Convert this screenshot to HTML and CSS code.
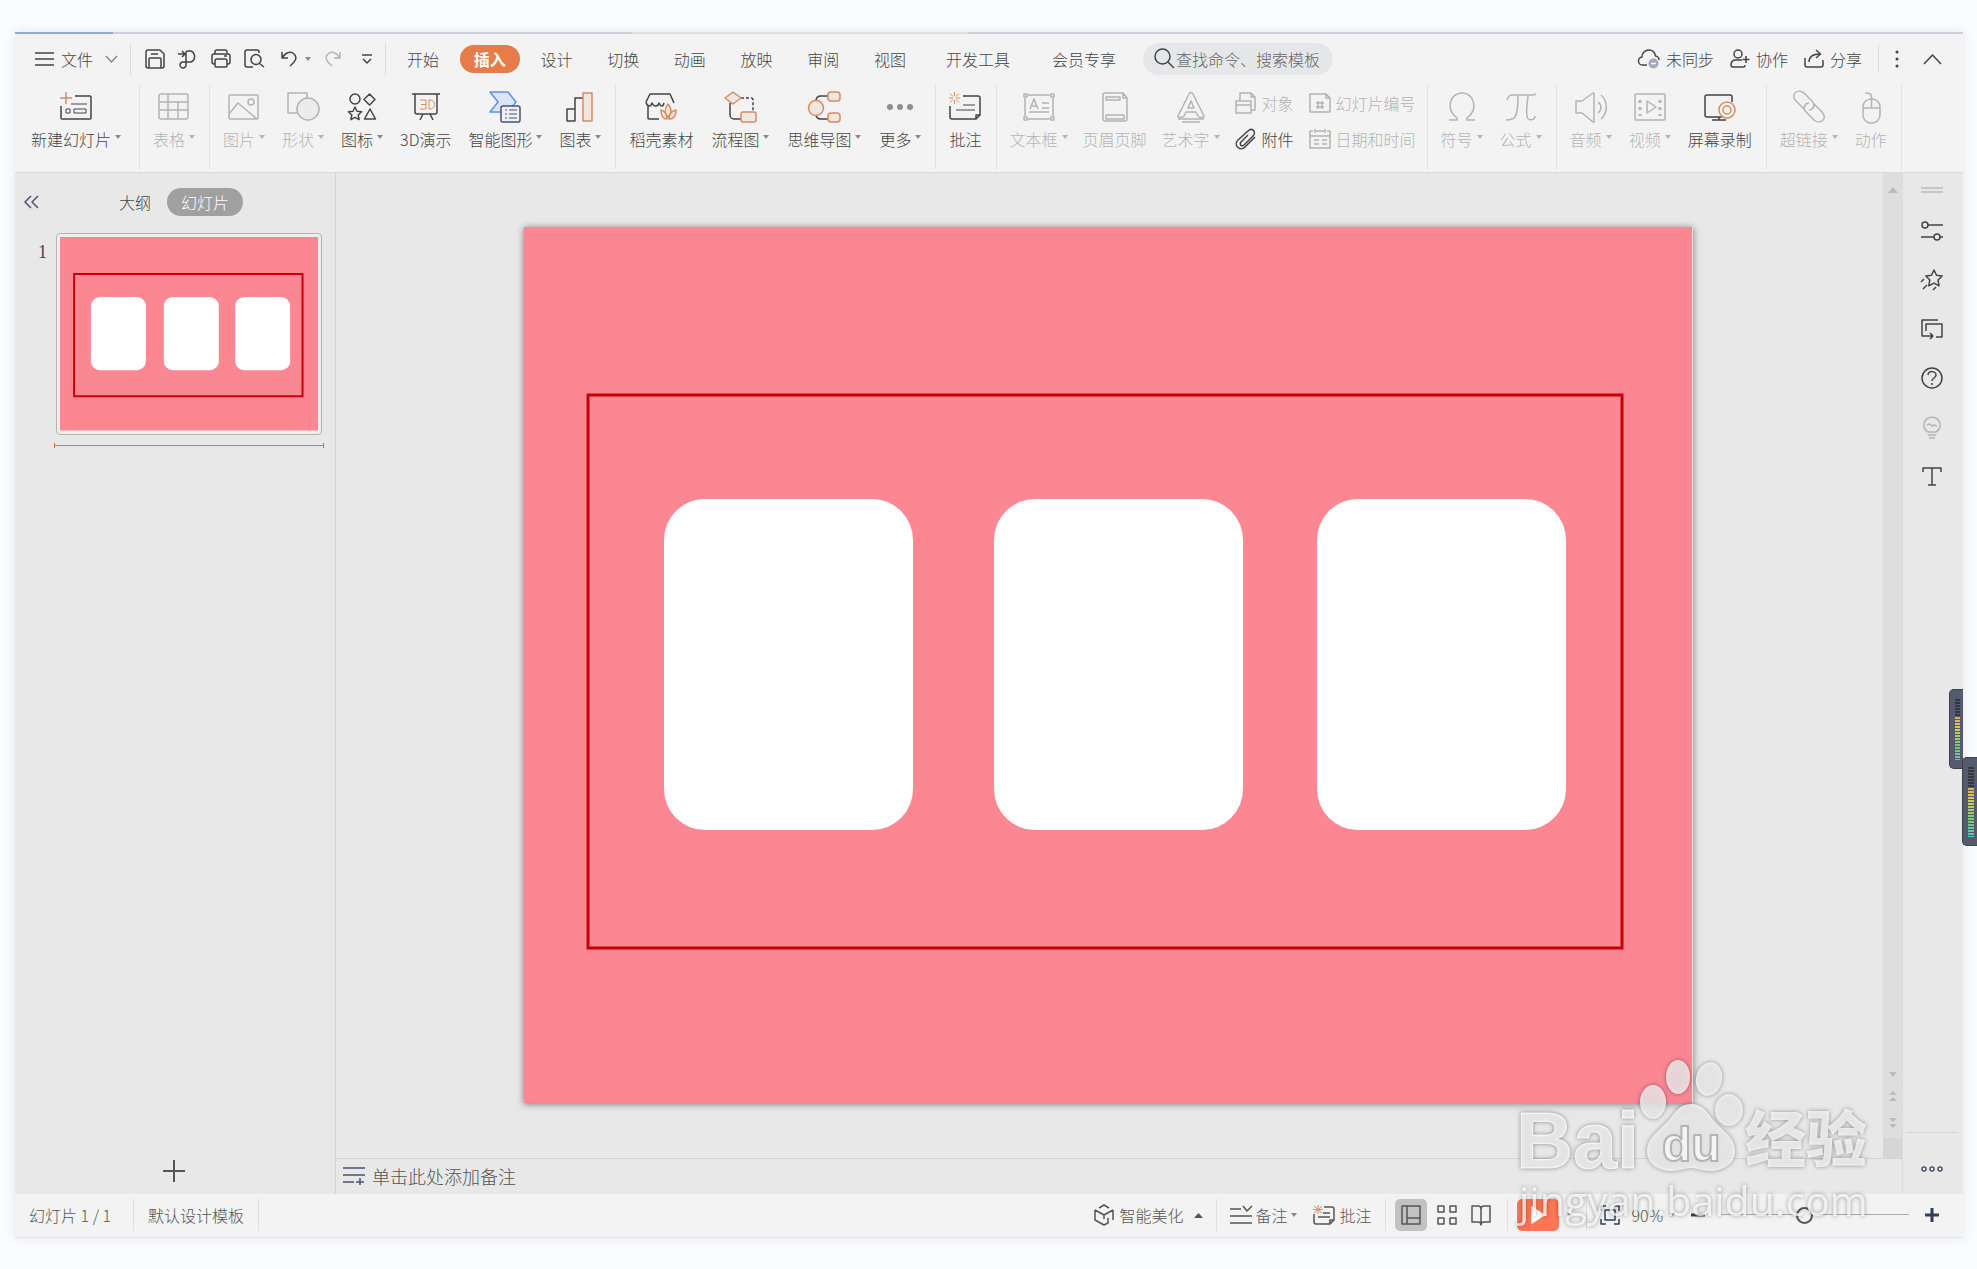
FILE: index.html
```html
<!DOCTYPE html>
<html lang="zh-CN">
<head>
  <meta charset="UTF-8">
  <title>演示文稿</title>
  <link rel="stylesheet" href="styles.css">
</head>
<body>
  <div class="app">
    <!-- 菜单栏 -->
    <header class="menubar">
      <button class="file-btn">
        <svg width="19" height="16" viewBox="0 0 19 16"><path d="M0 2h19M0 8h19M0 14h19"/></svg>
        文件
        <svg class="chevron" width="13" height="8" viewBox="0 0 13 8"><path d="M1 1l5.500 6L12 1"/></svg>
      </button>
      <span class="sep"></span>
      <div class="quick">
        <button aria-label="保存"><svg width="20" height="20" viewBox="0 0 20 20"><path d="M3 1h12l4 4v12a2 2 0 0 1-2 2H3a2 2 0 0 1-2-2V3a2 2 0 0 1 2-2zM4 19v-9a1 1 0 0 1 1-1h10a1 1 0 0 1 1 1v9M6 5h7"/></svg></button>
        <button aria-label="输出"><svg width="20" height="20" viewBox="0 0 20 20"><path d="M0 5h7M4 2l3 3-3 3M10 2h3a6 6 0 0 1 0 11H5.500a3 3 0 1 0 2.500 3V4a2 2 0 0 1 2-2"/></svg></button>
        <button aria-label="打印"><svg width="20" height="20" viewBox="0 0 20 20"><path d="M4 5V3a2 2 0 0 1 2-2h8a2 2 0 0 1 2 2v2M4 15H3a2 2 0 0 1-2-2V7a2 2 0 0 1 2-2h14a2 2 0 0 1 2 2v6a2 2 0 0 1-2 2h-1M6 10h8a2 2 0 0 1 2 2v5a1 1 0 0 1-1 1H5a1 1 0 0 1-1-1v-5a2 2 0 0 1 2-2zM13 7h3"/></svg></button>
        <button aria-label="打印预览"><svg width="20" height="20" viewBox="0 0 20 20"><path d="M9 18H3a2 2 0 0 1-2-2V3a2 2 0 0 1 2-2h10a2 2 0 0 1 2 2v1M15.500 14.500L20 18"/><circle cx="12" cy="10.500" r="5"/></svg></button>
      </div>
      <div class="history">
        <button aria-label="撤销"><svg width="16" height="18" viewBox="0 0 16 18"><path d="M1 2v6h6M1.500 7.500C5 2 10 1 13 4c4 4 1 8-4 12"/></svg><i class="caret"></i></button>
        <button class="off" aria-label="恢复"><svg width="16" height="18" viewBox="0 0 16 18"><path d="M15 2v6H9M14.500 7.500C11 2 6 1 3 4c-4 4-1 8 4 12"/></svg></button>
        <button aria-label="自定义"><svg width="10" height="10" viewBox="0 0 10 10"><path d="M0 1h10M1 5l4 4 4-4"/></svg></button>
      </div>
      <span class="sep"></span>
      <nav class="tabs">
        <button>开始</button>
        <button class="active">插入</button>
        <button>设计</button>
        <button>切换</button>
        <button>动画</button>
        <button>放映</button>
        <button>审阅</button>
        <button>视图</button>
      </nav>
      <nav class="tabs-more">
        <button>开发工具</button>
        <button>会员专享</button>
      </nav>
      <div class="search">
        <label for="search"><svg width="21" height="21" viewBox="0 0 21 21"><circle cx="8.500" cy="8.500" r="7.500"/><path d="M14 14l6 6"/></svg></label>
        <input id="search" type="text" placeholder="查找命令、搜索模板">
      </div>
      <div class="account">
        <button><svg width="22" height="20" viewBox="0 0 22 20"><path d="M9 16H5a4 4 0 0 1-1-8c0-4 3-7 7-7 4 0 6 3 6.500 6 2 0 3.500 2 3.500 4"/><circle class="badge" cx="15.500" cy="14.500" r="5"/><path class="minus" d="M13 14.500h5"/></svg>未同步</button>
        <button><svg width="20" height="20" viewBox="0 0 20 20"><circle cx="8" cy="5" r="4"/><path d="M12 11H6c-3 0-5 2-5 5 0 2 1 2 2 2h11c1 0 1-1 1-2M16 7v7M12.500 10.500h7"/></svg>协作</button>
        <button><svg width="20" height="20" viewBox="0 0 20 20"><path d="M1 9v7a2 2 0 0 0 2 2h14a2 2 0 0 0 2-2v-5M5 13c0-5 3-8 11-8M12 1l4.500 4L12 9"/></svg>分享</button>
        <span class="sep"></span>
        <button class="dots-v" aria-label="更多"><svg width="4" height="18" viewBox="0 0 4 18"><g class="solid"><circle cx="2" cy="2" r="1.500"/><circle cx="2" cy="9" r="1.500"/><circle cx="2" cy="16" r="1.500"/></g></svg></button>
        <button aria-label="收起功能区"><svg width="19" height="12" viewBox="0 0 19 12"><path d="M1 11l8.500-9L18 11"/></svg></button>
      </div>
    </header>

    <!-- 功能区 -->
    <section class="ribbon">
      <div class="group first">
        <button class="tool"><svg viewBox="0 0 32 32"><path d="M15 8h15a1 1 0 0 1 1 1v21a1 1 0 0 1-1 1H2a1 1 0 0 1-1-1V18"/><path class="thin" d="M11 16h16M6 21h4v4H6zM14 21h12v4H14z"/><path class="accent" d="M6 4v12M0 10h12"/></svg><span>新建幻灯片<i class="caret"></i></span></button>
      </div>
      <div class="group">
        <button class="tool off"><svg viewBox="0 0 32 32"><rect x="1" y="6" width="29" height="25" rx="2"/><path d="M1 14h29M1 22h29M10 6v25M20 14v17"/></svg><span>表格<i class="caret"></i></span></button>
      </div>
      <div class="group">
        <button class="tool off"><svg viewBox="0 0 32 32"><rect x="1" y="7" width="29" height="24" rx="1"/><path d="M1 26l9-11 19 16"/><circle cx="23" cy="14" r="3"/></svg><span>图片<i class="caret"></i></span></button>
        <button class="tool off"><svg viewBox="0 0 32 32"><path d="M20 10V5H1v20h10"/><circle class="shade" cx="21" cy="21" r="11"/></svg><span>形状<i class="caret"></i></span></button>
        <button class="tool"><svg viewBox="0 0 32 32"><circle cx="9" cy="11" r="5"/><path d="M23.500 6l5.500 5.500-5.500 5.500-5.500-5.500zM24 21l5.500 10h-11zM9 19l2 4.200 4.600.6-3.400 3.200.9 4.600L9 29.400l-4.100 2.200.9-4.600-3.400-3.200 4.600-.6z"/></svg><span>图标<i class="caret"></i></span></button>
        <button class="tool"><svg viewBox="0 0 32 32"><path d="M2 6h28M5 6v18a2 2 0 0 0 2 2h18a2 2 0 0 0 2-2V6M13 26l-3 6M20 26l3 6"/><path class="accent thin" d="M10 12h6v9h-6M11 16.500h5M19 12v9h1c6 0 6-9 0-9z"/></svg><span>3D演示</span></button>
        <button class="tool"><svg viewBox="0 0 32 32"><path class="blue" d="M1 4h18l8 10-8 10H1l8-10z"/><rect class="navy" x="12" y="18" width="19" height="16" rx="2"/><path class="navy thin" d="M16 22h2M20 22h8M16 26h2M20 26h8M16 30h2M20 30h8"/></svg><span>智能图形<i class="caret"></i></span></button>
        <button class="tool"><svg viewBox="0 0 32 32"><path d="M3 21h8v12H3zM11 33V10h8"/><path class="accent tint" d="M19 5h9v28h-9z"/></svg><span>图表<i class="caret"></i></span></button>
      </div>
      <div class="group wide">
        <button class="tool"><svg viewBox="0 0 32 32"><path d="M14 31H4a1 1 0 0 1-1-1V18M1 14l4-8h20l4 9M1 14c1 5 5 5 6 1 2 4 6 4 7 0 2 4 4 4 5 0"/><path class="accent tint" d="M23 16c-4 5-3 10 0 13 4-3 4-9 0-13zM16 22c0 6 2 9 6 9 0-5-2-8-6-9zM31 22c-4 1-7 4-7 9 5 0 7-3 7-9z"/></svg><span>稻壳素材</span></button>
        <button class="tool"><svg viewBox="0 0 32 32"><path d="M6 15v12a4 4 0 0 0 4 4h7"/><path class="dash" d="M17 10h10a2 2 0 0 1 2 2v12"/><path class="accent tint" d="M9 4l8 6-8 6-8-6zM19 24h11a2 2 0 0 1 2 2v6a2 2 0 0 1-2 2H19a2 2 0 0 1-2-2v-6a2 2 0 0 1 2-2z"/></svg><span>流程图<i class="caret"></i></span></button>
        <button class="tool"><svg viewBox="0 0 32 32"><path d="M8 13c0-3 2-5 5-5h7M8 26c0 3 2 5 5 5h7"/><circle class="accent tint" cx="8" cy="20" r="7.500"/><rect class="accent tint" x="20" y="4" width="12" height="9" rx="3"/><rect class="accent tint" x="20" y="25" width="12" height="9" rx="3"/></svg><span>思维导图<i class="caret"></i></span></button>
        <button class="tool"><svg viewBox="0 0 32 32"><g class="solid grey"><circle cx="6" cy="19" r="3"/><circle cx="16" cy="19" r="3"/><circle cx="26" cy="19" r="3"/></g></svg><span>更多<i class="caret"></i></span></button>
      </div>
      <div class="group">
        <button class="tool"><svg viewBox="0 0 32 32"><path d="M14 8h15a2 2 0 0 1 2 2v17l-4 4H3a2 2 0 0 1-2-2V18M31 27h-4v4z"/><path class="thin" d="M14 17h12M7 22h19"/><path class="accent thin" d="M5.500 4v4M5.500 12v4M0 10h4M7 10h4M1 5.500l3 3M7 11.500l3 3M10 5.500l-3 3M4 11.500l-3 3"/></svg><span>批注</span></button>
      </div>
      <div class="group tight">
        <button class="tool off"><svg viewBox="0 0 32 32"><path d="M5 7h22M5 31h22M2 10v18M30 10v18M6 24h20M19 15h7M19 20h7M7 21l4-10 4 10M8 18h6"/><path d="M1 6h3v3H1zM28 6h3v3h-3zM1 29h3v3H1zM28 29h3v3h-3z"/></svg><span>文本框<i class="caret"></i></span></button>
        <button class="tool off"><svg viewBox="0 0 32 32"><path d="M6 5h18l4 5v21a2 2 0 0 1-2 2H6a2 2 0 0 1-2-2V7a2 2 0 0 1 2-2zM24 5v5h4M7 9h14v3H7zM7 27h18v4H7z"/></svg><span>页眉页脚</span></button>
        <button class="tool off"><svg viewBox="0 0 32 32"><path d="M3 28L14 6c1-2 3-2 4 0l11 22c1 2-5 2-6 0l-2-4H11l-2 4c-1 2-7 2-6 0zM16 13l-3 7h6zM3 31h26M7 34h18"/></svg><span>艺术字<i class="caret"></i></span></button>
        <div class="stack">
          <button class="off"><svg viewBox="0 0 22 22"><path d="M5 9V1h11l4 4v13h-4M1 9h15v12H1zM1 13h15M16 1v4h4"/></svg>对象</button>
          <button><svg viewBox="0 0 22 22"><path d="M13 7l-7 7c-2 3 1 5 3 3l9-9c4-4-1-9-5-5L3 12c-5 5 2 12 7 7l10-10"/></svg>附件</button>
        </div>
        <div class="stack">
          <button class="off"><svg viewBox="0 0 22 22"><path d="M1 2h16l4 4v14H1zM17 2v4h4M9 9v8M13 9v8M7 11h8M7 15h8"/></svg>幻灯片编号</button>
          <button class="off"><svg viewBox="0 0 22 22"><path d="M4 3H1v17h20V3h-3M7 3h8M6 1v4M16 1v4M1 8h20M5 12h5M13 12h5M5 16h5M13 16h5"/></svg>日期和时间</button>
        </div>
      </div>
      <div class="group">
        <button class="tool off"><svg viewBox="0 0 32 32"><path d="M3 32h8v-2C-1 21 4 5 16 5s17 16 5 25v2h8"/></svg><span>符号<i class="caret"></i></span></button>
        <button class="tool off"><svg viewBox="0 0 32 32"><path d="M2 12c1-4 3-5 6-5h17c3 0 5 0 6-1M13 8c0 13-1 22-6 23-2 1-4 1-6 1M23 8c-1 8-2 15-1 20 1 6 8 4 8 0"/></svg><span>公式<i class="caret"></i></span></button>
      </div>
      <div class="group">
        <button class="tool off"><svg viewBox="0 0 32 32"><path d="M1 13h6l11-8h1v29h-1L7 25H1zM23 14c4 3 4 8 0 11M26 7c7 6 7 18 0 24"/></svg><span>音频<i class="caret"></i></span></button>
        <button class="tool off"><svg viewBox="0 0 32 32"><rect x="1" y="6" width="30" height="26" rx="1"/><path d="M13 13v12l9-6z"/><path class="dotted" d="M6 12v16M26 12v16"/></svg><span>视频<i class="caret"></i></span></button>
        <button class="tool"><svg viewBox="0 0 32 32"><path d="M28 14V9a2 2 0 0 0-2-2H3a2 2 0 0 0-2 2v18a2 2 0 0 0 2 2h15M15 29v3M8 32h14"/><circle class="accent" cx="23" cy="22" r="8"/><circle class="accent" cx="23" cy="22" r="4"/></svg><span>屏幕录制</span></button>
      </div>
      <div class="group">
        <button class="tool off"><svg viewBox="0 0 32 32"><path d="M11 21l-8-8C-3 6 5 0 11 5l8 8c4 4 1 9-3 9M21 16l8 8c6 7-2 13-8 8l-8-8c-4-4-1-9 3-9"/></svg><span>超链接<i class="caret"></i></span></button>
        <button class="tool off"><svg viewBox="0 0 32 32"><rect x="8" y="11" width="17" height="24" rx="8"/><path d="M8 20h17M16.500 20V9c0-4-3-4-6-4"/></svg><span>动作</span></button>
      </div>
    </section>

    <main class="work">
      <!-- 幻灯片列表 -->
      <aside class="outline">
        <div class="outline-head">
          <button class="collapse" aria-label="收起"><svg width="15" height="14" viewBox="0 0 15 14"><path d="M7 1L1 7l6 6M14 1L8 7l6 6"/></svg></button>
          <button>大纲</button>
          <button class="pill">幻灯片</button>
        </div>
        <div class="thumb-row">
          <span class="num">1</span>
          <div class="thumb">
            <svg class="slide-art" viewBox="0 0 1168 876"><use href="#slide"/></svg>
          </div>
        </div>
        <div class="drop-line"></div>
        <button class="add" aria-label="新建幻灯片"><svg width="22" height="22" viewBox="0 0 22 22"><path d="M11 0v22M0 11h22"/></svg></button>
      </aside>

      <!-- 编辑区 -->
      <section class="editor">
        <div class="stage">
          <div class="canvas">
            <svg class="slide-art slide" viewBox="0 0 1168 876">
              <g id="slide">
                <rect class="s-bg" width="1168" height="876"/>
                <rect class="s-frame" x="64" y="168" width="1034" height="553"/>
                <rect class="s-card" x="140" y="272" width="249" height="331" rx="41"/>
                <rect class="s-card" x="470" y="272" width="249" height="331" rx="41"/>
                <rect class="s-card" x="793" y="272" width="249" height="331" rx="41"/>
              </g>
            </svg>
          </div>
          <div class="scrollbar">
            <svg width="10" height="6" viewBox="0 0 10 6"><path d="M5 0l5 6H0z"/></svg>
            <svg class="down" width="10" height="58" viewBox="0 0 10 58"><path d="M1 2h8L5 7zM5 21l4 4H1zM5 27l4 4H1zM1 48h8l-4 4zM1 54h8l-4 4z"/></svg>
            <span class="corner"></span>
          </div>
        </div>
        <div class="notes">
          <svg width="22" height="18" viewBox="0 0 22 18"><path d="M0 1h22M0 8h22M0 15h11M17 11v7M13 15h8"/></svg>
          单击此处添加备注
        </div>
      </section>

      <!-- 右侧工具条 -->
      <aside class="rail">
        <svg class="grip" width="22" height="6" viewBox="0 0 22 6"><path d="M0 1h22M0 5h22"/></svg>
        <button aria-label="对象属性"><svg viewBox="0 0 22 22"><circle cx="4" cy="5" r="3"/><path d="M7 5h15M0 17h13M19 17h3"/><circle cx="16" cy="17" r="3"/></svg></button>
        <button aria-label="动画"><svg viewBox="0 0 22 22"><path d="M13 1l2.500 5.200 5.700.8-4.200 4 1 5.800-5-2.700-5.200 2.700 1-5.800-4-4 5.700-.8zM0 13l3-3M2 20l4-4M12 21l3-3"/></svg></button>
        <button aria-label="切换"><svg viewBox="0 0 22 22"><path d="M17 2H1v16h10M9 15l3 3-3 3M5 13V6h16v13h-6"/></svg></button>
        <button aria-label="帮助"><svg viewBox="0 0 22 22"><circle cx="11" cy="11" r="10"/><path d="M7 8c0-5 8-4 8 0 0 3-4 3-4 6M11 16v2"/></svg></button>
        <button class="off" aria-label="提示"><svg viewBox="0 0 22 22"><path d="M7 16c-5-3-5-8-3-11 3-5 11-5 14 0 2 3 2 8-3 11zM7 19h8M8 22h6M6 9l3-1 2 2 2-1 3 1"/></svg></button>
        <button aria-label="文字"><svg viewBox="0 0 22 22"><path d="M2 7V3h18v4M11 3v17M7 20h8"/></svg></button>
        <div class="rail-foot">
          <button aria-label="更多"><svg viewBox="0 0 22 22"><g class="navy"><circle cx="3" cy="11" r="2"/><circle cx="11" cy="11" r="2"/><circle cx="19" cy="11" r="2"/></g></svg></button>
        </div>
      </aside>
    </main>

    <!-- 状态栏 -->
    <footer class="status">
      <span class="cell">幻灯片 1 / 1</span>
      <span class="cell">默认设计模板</span>
      <div class="status-right">
        <div class="set beauty">
          <button><svg width="20" height="22" viewBox="0 0 20 22"><path d="M5 4l5-3 5 3M1 6l9 5 9-5M1 6v10l9 5 4-2v-5M10 11v4M19 6v10"/></svg>智能美化</button>
          <svg width="9" height="5" viewBox="0 0 9 5"><path class="solid" d="M4.500 0L9 5H0z"/></svg>
        </div>
        <div class="set">
          <button class="close"><svg width="22" height="20" viewBox="0 0 22 20"><path d="M0 4h11M13 1l4 5 5-5M0 11h22M0 18h22"/></svg>备注<i class="caret"></i></button>
          <button><svg width="22" height="20" viewBox="0 0 22 20"><path d="M11 2h8a2 2 0 0 1 2 2v11l-4 4H3a2 2 0 0 1-2-2V9M21 15h-4v4M10 8h7M5 12h12"/><path class="accent thin" d="M5 0v9M0 4.500h10M1 1l8 7M9 1L1 8"/></svg>批注</button>
        </div>
        <div class="set views">
          <button class="on" aria-label="普通视图"><svg width="20" height="20" viewBox="0 0 20 20"><path d="M1 1h18v18H1zM6 1v18M6 13h13"/></svg></button>
          <button aria-label="浏览视图"><svg width="20" height="20" viewBox="0 0 20 20"><path d="M1 1h6v6H1zM13 1h6v6h-6zM1 13h6v6H1zM13 13h6v6h-6z"/></svg></button>
          <button aria-label="阅读视图"><svg width="20" height="20" viewBox="0 0 20 20"><path d="M10 4c0-2-1-3-3-3H1v16h6c2 0 3 1 3 3 0-2 1-3 3-3h6V1h-6c-2 0-3 1-3 3v15"/></svg></button>
        </div>
        <div class="set play">
          <button class="play-btn" aria-label="放映"><svg width="14" height="18" viewBox="0 0 14 18"><path d="M1 1l12 8-12 8z"/></svg></button>
          <i class="caret"></i>
        </div>
        <div class="zoom">
          <button aria-label="适应窗口"><svg class="navy-line" width="20" height="20" viewBox="0 0 20 20"><path d="M1 6V1h5M14 1h5v5M19 14v5h-5M6 19H1v-5M5 5h10v10H5z"/></svg></button>
          <button class="percent">90%<i class="caret"></i></button>
          <button class="bold" aria-label="缩小"><svg width="14" height="14" viewBox="0 0 14 14"><path d="M0 7h14"/></svg></button>
          <input type="range" min="0" max="100" value="44" aria-label="缩放">
          <button class="bold" aria-label="放大"><svg width="14" height="14" viewBox="0 0 14 14"><path d="M7 0v14M0 7h14"/></svg></button>
        </div>
      </div>
    </footer>
  </div>

  <div class="meter meter-a"><i></i></div>
  <div class="meter meter-b"><i></i></div>

  <svg class="watermark" width="380" height="180" viewBox="0 0 380 180">
    <text class="bai" x="11" y="118">Bai</text>
    <ellipse cx="148" cy="52" rx="13" ry="17"/>
    <ellipse cx="173" cy="27" rx="12" ry="17"/>
    <ellipse cx="204" cy="29" rx="13" ry="17" transform="rotate(12 204 29)"/>
    <ellipse cx="224" cy="60" rx="14" ry="16"/>
    <path d="M186 54c12 0 16 8 23 17 9 10 21 16 21 30 0 13-12 20-25 20-9 0-13-3-19-3s-10 3-19 3c-15 0-25-8-25-20 0-13 11-19 20-29 8-9 12-18 24-18z"/>
    <text class="du" x="157" y="111">du</text>
    <text class="jy" x="240" y="112">经验</text>
    <text class="url" x="14" y="166">jingyan.baidu.com</text>
  </svg>
</body>
</html>
```

FILE: styles.css
```css
* {
  box-sizing: border-box;
}
body {
  margin: 0;
  min-height: 100vh;
  padding: 32px 14px 31px 15px;
  display: flex;
  position: relative;
  overflow-x: hidden;
  background: #fbfcff;
  color: #444;
  font: 300 16px/20px "Noto Sans CJK SC", sans-serif;
}
button,
input {
  margin: 0;
  padding: 0;
  border: 0;
  background: none;
  color: inherit;
  font: inherit;
}
button {
  display: flex;
  align-items: center;
  flex: none;
  white-space: nowrap;
}
svg {
  display: block;
  flex: none;
  overflow: visible;
  fill: none;
  stroke: currentColor;
  stroke-width: 1.5;
  stroke-linejoin: round;
}
.thin {
  stroke-width: 1;
}
.accent {
  stroke: #d98c5f;
}
.tint {
  fill: #f1e6e0;
}
.solid {
  fill: currentColor;
  stroke: none;
}
.grey {
  fill: #8f8f8f;
}
.navy {
  stroke: #4a5370;
  fill: #f0f1f4;
}
.blue {
  stroke: #5b8ff5;
  fill: #dbe5f5;
}
.shade {
  fill: #ececec;
}
.dash {
  stroke-dasharray: 3 2;
}
.dotted {
  stroke-width: 3;
  stroke-dasharray: 3 4;
}
.off {
  color: #b4b4b4;
}
.caret {
  border: 3px solid transparent;
  border-top: 4px solid #8a8a8a;
  border-bottom: 0;
}
.off .caret {
  border-top-color: #b4b4b4;
}
.sep {
  width: 1px;
  height: 32px;
  background: #dcdcdc;
}

.app {
  flex: 1;
  min-width: 0;
  display: flex;
  flex-direction: column;
  background: #f3f3f3;
  border-bottom: 1px solid #e3e5e8;
  box-shadow: 0 0 10px rgba(60, 70, 90, .12);
}

/* 菜单栏 */
.menubar {
  display: flex;
  align-items: center;
  height: 53px;
  padding: 0 21px 0 20px;
  background: linear-gradient(90deg, #94a8e2 98px, #cdd1da 98px 617px, #dfe1e5 617px 953px, #cdd1da 953px) 0 0 / 100% 2px no-repeat;
}
.file-btn {
  gap: 7px;
  margin-right: 12px;
}
.chevron {
  margin-left: 5px;
  color: #888;
}
.quick {
  display: flex;
  gap: 13px;
  margin: 0 17px 0 14px;
}
.history {
  display: flex;
  gap: 14px;
  margin-right: 13px;
}
.history button:first-child {
  gap: 8px;
}
.history button:last-child {
  margin-left: 7px;
}
.tabs {
  display: flex;
  justify-content: space-between;
  width: 527px;
  margin-left: 7px;
}
.tabs button {
  height: 28px;
  padding: 0 14px;
  border-radius: 14px;
}
.tabs .active {
  background: #e77c4b;
  color: #fff;
  font-weight: 700;
}
.tabs-more {
  display: flex;
  gap: 42px;
  margin: 0 27px 0 26px;
}
.search {
  display: flex;
  align-items: center;
  gap: 1px;
  width: 190px;
  height: 32px;
  padding-left: 11px;
  border-radius: 16px;
  background: #e6e7e9;
}
.search input {
  width: 150px;
  outline: none;
}
.search input::placeholder {
  color: #666;
}
.account {
  display: flex;
  align-items: center;
  gap: 16px;
  margin-left: auto;
}
.account button {
  gap: 6px;
}
.account .sep {
  height: 27px;
}
.account .dots-v {
  margin-right: 8px;
}
.badge {
  fill: #a3aabd;
  stroke: none;
}
.minus {
  stroke: #fff;
}

/* 功能区 */
.ribbon {
  display: flex;
  height: 88px;
  padding: 0 0 3px 3px;
  border-bottom: 1px solid #dadada;
}
.group {
  display: flex;
  align-items: flex-start;
  gap: 17px;
  padding: 0 14px 0 13px;
  border-right: 1px solid #e2e2e2;
}
.first {
  padding-right: 18px;
}
.wide {
  gap: 18px;
}
.tight {
  gap: 15px;
  padding-right: 11px;
}
.tool {
  flex-direction: column;
  gap: 8px;
  padding-top: 2px;
}
.tool > svg {
  width: 32px;
  height: 34px;
}
.tool span {
  display: flex;
  gap: 4px;
}
.tool .caret {
  margin-top: 6px;
  height: 4px;
}
.stack {
  display: flex;
  flex-direction: column;
  gap: 16px;
  padding-top: 8px;
}
.stack button {
  gap: 5px;
}
.stack svg {
  width: 22px;
  height: 22px;
  margin: -1px 0;
}

/* 主体 */
.work {
  flex: 1;
  display: flex;
  background: #e8e8e8;
}
.outline {
  flex: none;
  width: 321px;
  display: flex;
  flex-direction: column;
  border-right: 1px solid #d3d3d3;
}
.outline-head {
  display: flex;
  align-items: center;
  padding: 15px 0 0 9px;
}
.collapse {
  margin-right: 80px;
  color: #4a5370;
}
.pill {
  height: 28px;
  margin-left: 16px;
  padding: 0 14px;
  border-radius: 14px;
  background: #a0a0a0;
  color: #fff;
}
.thumb-row {
  display: flex;
  margin-top: 17px;
  --frame-width: 2px;
}
.num {
  width: 41px;
  padding: 9px 9px 0 0;
  text-align: right;
  font: 18px/20px "Liberation Serif", serif;
}
.thumb {
  width: 266px;
  padding: 3px;
  border: 1px solid #b5b5b5;
  border-radius: 4px;
  background: #eee;
}
.slide-art {
  width: 100%;
  aspect-ratio: 4 / 3;
}
.s-bg {
  fill: #fb8793;
  stroke: none;
}
.s-frame {
  stroke: #c80000;
  stroke-width: var(--frame-width, 3px);
  stroke-linejoin: miter;
  vector-effect: non-scaling-stroke;
}
.s-card {
  fill: #fff;
  stroke: none;
}
.drop-line {
  width: 270px;
  height: 5px;
  margin: 8px 0 0 39px;
  border: solid #d9692a;
  border-width: 0 1px;
  background: linear-gradient(#db7d4a, #db7d4a) 0 2px / 100% 1px no-repeat;
}
.add {
  margin: auto auto 12px 148px;
  color: #555;
}
.add svg {
  stroke-width: 2;
}
.editor {
  flex: 1;
  min-width: 0;
  display: flex;
  flex-direction: column;
}
.stage {
  flex: 1;
  display: flex;
}
.canvas {
  flex: 1;
  display: flex;
  align-items: center;
  justify-content: center;
  padding: 0 2px 2px 0;
}
.slide {
  width: 75.6%;
  box-shadow: 0 1px 7px rgba(0, 0, 0, .5);
}
.scrollbar {
  width: 19px;
  display: flex;
  flex-direction: column;
  align-items: center;
  padding-top: 14px;
  background: #dedede;
}
.scrollbar svg {
  fill: #bbb;
  stroke: none;
}
.scrollbar .down {
  margin-top: auto;
}
.corner {
  width: 19px;
  height: 20px;
  margin-top: 10px;
  background: #d6d6d6;
}
.notes {
  display: flex;
  align-items: center;
  gap: 7px;
  height: 36px;
  padding: 0 0 1px 7px;
  border-top: 1px solid #d5d5d5;
  color: #555;
  font-size: 18px;
}
.notes svg {
  color: #4a5370;
}
.rail {
  flex: none;
  width: 61px;
  display: flex;
  flex-direction: column;
  align-items: center;
  gap: 27px;
  padding: 14px 2px 0 0;
  border-left: 1px solid #dcdcdc;
}
.rail button svg {
  width: 22px;
  height: 22px;
}
.grip {
  color: #bbb;
}
.rail-foot {
  display: flex;
  justify-content: center;
  align-items: center;
  width: 52px;
  height: 62px;
  margin-top: auto;
  padding-top: 10px;
  border-top: 1px solid #d5d5d5;
}

/* 状态栏 */
.status {
  display: flex;
  align-items: center;
  height: 43px;
  padding-bottom: 1px;
  color: #555;
}
.cell {
  padding: 6px 14px;
  border-right: 1px solid #e0e0e0;
}
.cell:first-child {
  min-width: 119px;
}
.status-right {
  display: flex;
  margin-left: auto;
  padding-right: 24px;
}
.set {
  display: flex;
  align-items: center;
  gap: 16px;
  height: 32px;
  padding: 0 13px;
  border-right: 1px solid #e0e0e0;
}
.set button {
  gap: 5px;
}
.set .close {
  gap: 3px;
}
.beauty {
  gap: 11px;
}
.views {
  gap: 14px;
  padding: 0 16px 0 9px;
}
.views .on {
  padding: 6px;
  margin-right: -4px;
  border-radius: 5px;
  background: #c2c2c2;
}
.play {
  gap: 8px;
  padding: 0 13px 0 9px;
}
.play-btn {
  width: 42px;
  height: 32px;
  justify-content: center;
  border-radius: 5px;
  background: #fc7753;
  color: #fff;
}
.play-btn path {
  fill: #fff;
}
.zoom {
  display: flex;
  align-items: center;
  gap: 16px;
  padding-left: 13px;
}
.percent {
  gap: 6px;
  margin: 0 0 0 -4px;
}
.navy-line,
.bold {
  color: #323d5c;
}
.bold svg {
  stroke-width: 3;
}
.zoom input {
  width: 188px;
  height: 18px;
  appearance: none;
  background: linear-gradient(#aaa, #aaa) 0 8px / 100% 1px no-repeat;
}
.zoom input::-webkit-slider-thumb {
  appearance: none;
  width: 17px;
  height: 17px;
  border: 2px solid #555;
  border-radius: 50%;
  background: #f3f3f3;
}

/* 右侧悬浮音量条 */
.meter {
  position: absolute;
  padding: 9px 3px 8px 5px;
  border: 1px solid #3d414e;
  border-right: 0;
  border-radius: 5px 0 0 5px;
  background: #555b6c;
}
.meter i {
  display: block;
  height: 100%;
  background:
    repeating-linear-gradient(transparent 0 2px, #555b6c 2px 3px),
    linear-gradient(#343843 28%, #e0ab4f 28%, #c9cf55 50%, #7cc97b 75%, #4fc9b9);
}
.meter-a {
  top: 689px;
  right: 14px;
  width: 14px;
  height: 80px;
}
.meter-b {
  top: 757px;
  right: 0;
  width: 15px;
  height: 89px;
}

.watermark {
  position: absolute;
  right: 92px;
  bottom: 39px;
  fill: rgba(255, 255, 255, .75);
  stroke: none;
  pointer-events: none;
  filter: drop-shadow(0 0 2px rgba(0, 0, 0, .5));
}
.bai {
  font: 700 79px "Liberation Sans", sans-serif;
  stroke: rgba(255, 255, 255, .75);
  stroke-width: 1;
}
.du {
  font: 700 48px "Liberation Sans", sans-serif;
  fill: #f4f4f4;
  stroke: #b4b4b4;
  stroke-width: 2;
}
.jy {
  font: 900 61px "Noto Sans CJK SC", sans-serif;
}
.url {
  font: 400 41px "Open Sans", sans-serif;
}
```
